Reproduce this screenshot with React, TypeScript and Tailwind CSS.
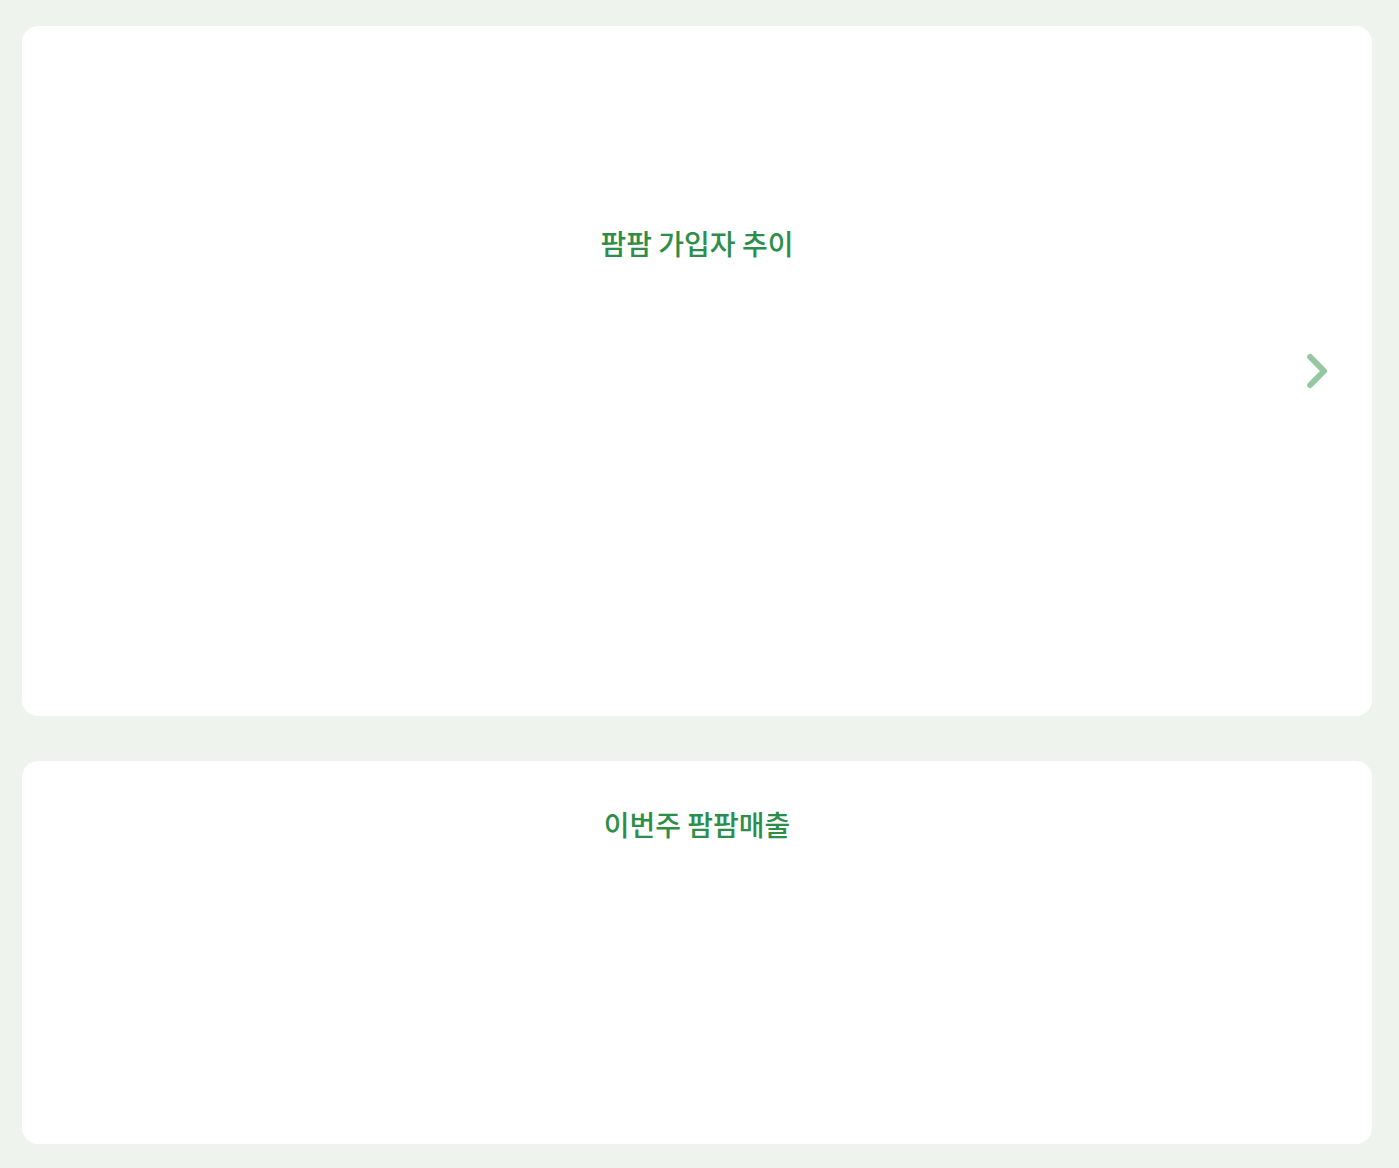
import { useState } from "react";

const headingClass =
  "text-center font-['Noto_Sans_CJK_KR',sans-serif] text-[28px] leading-10 font-medium text-[#2c8e48]";

export default function App() {
  const [, setPage] = useState(0);

  return (
    <main className="grid min-h-screen grid-rows-[690fr_383fr] gap-[45px] bg-[#eef3ed] pt-[26px] pr-[27px] pb-6 pl-[22px]">
      <section className="grid grid-cols-[1fr_auto_1fr] rounded-2xl bg-white">
        <h2 className={`${headingClass} col-start-2 pt-[197px]`}>팜팜 가입자 추이</h2>
        <button
          type="button"
          aria-label="다음"
          onClick={() => setPage((page) => page + 1)}
          className="mr-[30px] cursor-pointer self-center justify-self-end text-[#96c7a3]"
        >
          <svg viewBox="0 0 50 50" className="h-[50px] w-[50px]" fill="none" aria-hidden="true">
            <path d="M18.2 11L32 25L18.2 39" stroke="currentColor" strokeWidth="6" strokeLinecap="round" strokeLinejoin="round" />
          </svg>
        </button>
      </section>
      <section className="rounded-2xl bg-white pt-[43px]">
        <h2 className={headingClass}>이번주 팜팜매출</h2>
      </section>
    </main>
  );
}
